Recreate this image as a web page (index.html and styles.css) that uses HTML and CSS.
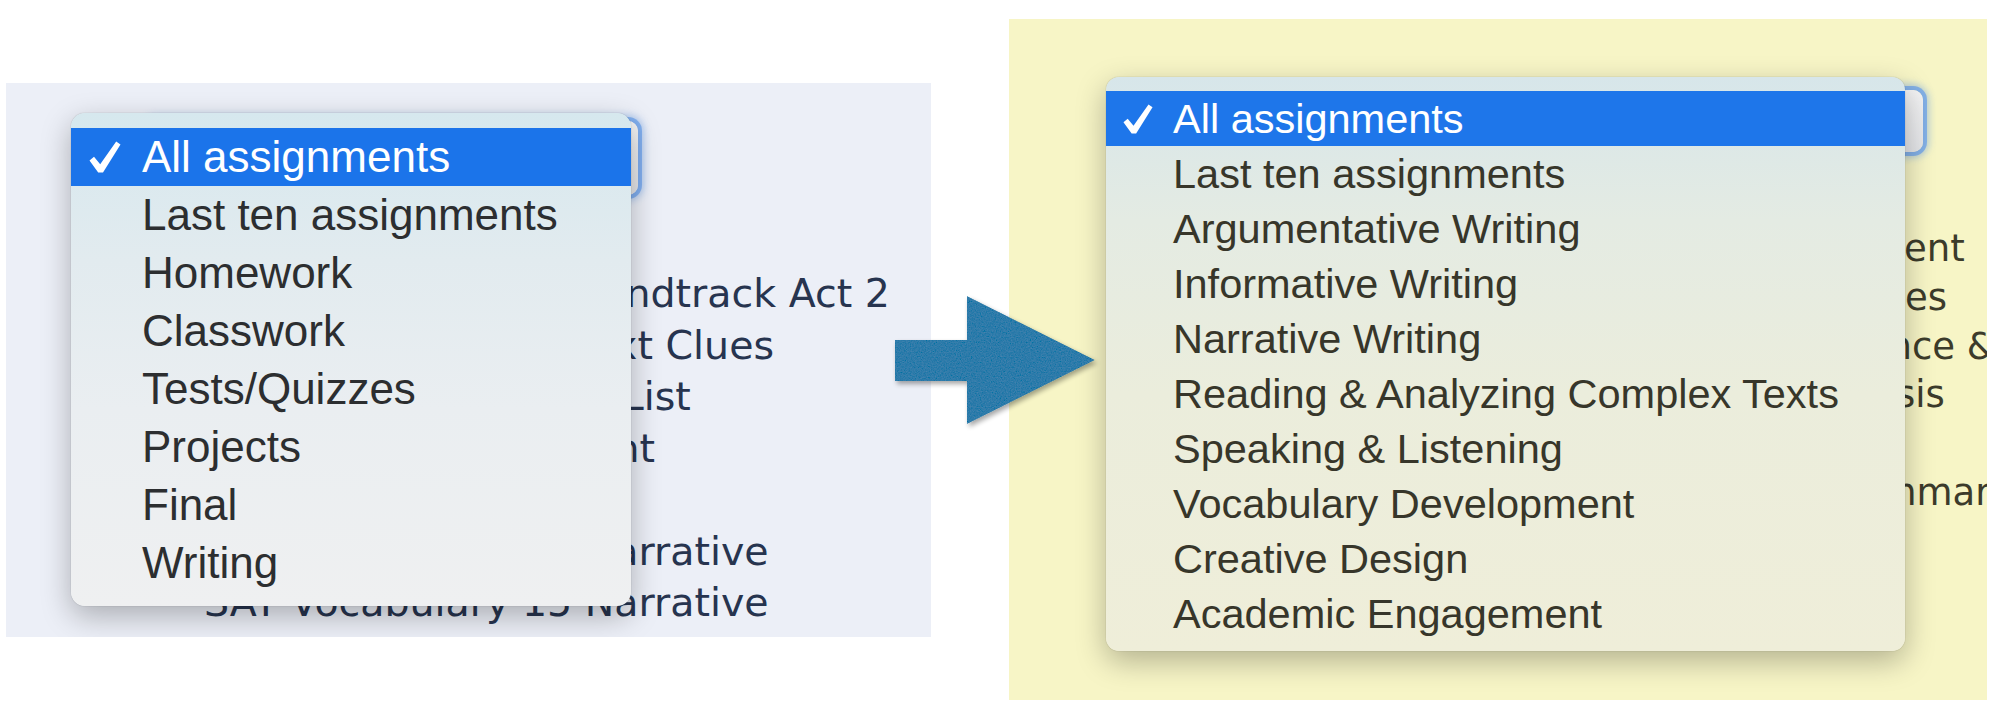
FILE: index.html
```html
<!DOCTYPE html>
<html lang="en">
<head>
    <meta charset="UTF-8">
    <meta name="viewport" content="width=device-width, initial-scale=1.0">
    <title>Assignment filter: before and after</title>
    <link rel="stylesheet" href="styles.css">
</head>
<body>
    <div class="stage">
        <!-- old category list -->
        <div class="shot shot-before">
            <div class="select"></div>
            <div class="rows">
                <div>Romeo and Juliet Soundtrack Act 2</div>
                <div>SAT Vocab 14: Context Clues</div>
                <div>Romeo &amp; Juliet Word List</div>
                <div>Act 2 Quiz Assessment</div>
                <div>Journal Entry</div>
                <div>SAT Vocabulary 14 Narrative</div>
                <div>SAT Vocabulary 15 Narrative</div>
                <div>Character Analysis Chart</div>
            </div>
            <ul class="menu">
                <li class="picked">
                    <span class="mark">
                        <svg viewBox="0 0 32 32" width="32" height="32"><path d="M0.5 19.5 L5 15.8 L11.2 23.2 L27.2 0.6 L31.5 3.4 L14 31.4 L9.2 31.4 Z" fill="#fff"/></svg>
                    </span>All assignments
                </li>
                <li><span class="mark"></span>Last ten assignments</li>
                <li><span class="mark"></span>Homework</li>
                <li><span class="mark"></span>Classwork</li>
                <li><span class="mark"></span>Tests/Quizzes</li>
                <li><span class="mark"></span>Projects</li>
                <li><span class="mark"></span>Final</li>
                <li><span class="mark"></span>Writing</li>
            </ul>
        </div>

        <svg class="arrow" viewBox="0 0 215 145" width="215" height="145">
            <defs>
                <filter id="paper" x="-10%" y="-10%" width="130%" height="130%">
                    <feGaussianBlur in="SourceAlpha" stdDeviation="2.5"/>
                    <feOffset dx="2" dy="3" result="blur"/>
                    <feComponentTransfer in="blur" result="shadow">
                        <feFuncA type="linear" slope="0.35"/>
                    </feComponentTransfer>
                    <feTurbulence type="fractalNoise" baseFrequency="0.8" numOctaves="2" seed="4" result="noise"/>
                    <feColorMatrix in="noise" type="matrix" values="0.33 0.33 0.33 0 0  0.33 0.33 0.33 0 0  0.33 0.33 0.33 0 0  0 0 0 0 1" result="gray"/>
                    <feComposite in="gray" in2="SourceGraphic" operator="arithmetic" k1="0" k2="0.14" k3="1" k4="-0.07" result="mix"/>
                    <feComposite in="mix" in2="SourceGraphic" operator="in" result="tex"/>
                    <feMerge>
                        <feMergeNode in="shadow"/>
                        <feMergeNode in="tex"/>
                    </feMerge>
                </filter>
            </defs>
            <polygon points="6,50 78,50 78,6 206,70 78,134 78,91 6,91" fill="#2e7baa" filter="url(#paper)"/>
        </svg>

        <!-- new standards-based list -->
        <div class="shot shot-after">
            <div class="select"></div>
            <div class="rows">
                <div>Argumentative Essay Assessment</div>
                <div>Unit 3: Vocabulary Context Clues</div>
                <div>Reading - Citing Textual Evidence &amp;</div>
                <div>Character Development Analysis</div>
                <div>Act 2 Quiz</div>
                <div>Language Conventions &amp; Grammar</div>
            </div>
            <ul class="menu">
                <li class="picked">
                    <span class="mark">
                        <svg viewBox="0 0 32 32" width="30" height="30"><path d="M0.5 19.5 L5 15.8 L11.2 23.2 L27.2 0.6 L31.5 3.4 L14 31.4 L9.2 31.4 Z" fill="#fff"/></svg>
                    </span>All assignments
                </li>
                <li><span class="mark"></span>Last ten assignments</li>
                <li><span class="mark"></span>Argumentative Writing</li>
                <li><span class="mark"></span>Informative Writing</li>
                <li><span class="mark"></span>Narrative Writing</li>
                <li><span class="mark"></span>Reading &amp; Analyzing Complex Texts</li>
                <li><span class="mark"></span>Speaking &amp; Listening</li>
                <li><span class="mark"></span>Vocabulary Development</li>
                <li><span class="mark"></span>Creative Design</li>
                <li><span class="mark"></span>Academic Engagement</li>
            </ul>
        </div>
    </div>
</body>
</html>
```

FILE: styles.css
```css
body {
    margin: 0;
    background: #ffffff;
    font-family: "Liberation Sans", Arial, sans-serif;
}
.stage {
    position: relative;
    display: flex;
    align-items: flex-start;
    gap: 78px;
    width: 2002px;
    height: 716px;
    padding-left: 6px;
    box-sizing: border-box;
}
.shot {
    position: relative;
    overflow: hidden;
    box-sizing: border-box;
    flex-shrink: 0;
}

/* the select control under the open menu */
.select {
    border-radius: 10px;
    background: linear-gradient(#f4f4f5, #e4e5e8);
    box-shadow: 0 0 0 4px rgba(104, 160, 236, 0.7), 0 0 7px 6px rgba(104, 160, 236, 0.45);
}
.rows {
    white-space: nowrap;
    font-family: "DejaVu Sans", sans-serif;
}

/* popup menu */
.menu {
    position: absolute;
    list-style: none;
    margin: 0;
    box-sizing: border-box;
    box-shadow: 0 10px 30px rgba(0, 0, 0, 0.28), 0 0 1px rgba(0, 0, 0, 0.4);
}
.menu li {
    display: flex;
    align-items: center;
    white-space: nowrap;
}
.menu .mark {
    display: flex;
    align-items: center;
    flex-shrink: 0;
}
.menu .picked {
    background: #1b74ea;
    color: #ffffff;
}

/* left picture */
.shot-before {
    width: 925px;
    height: 554px;
    margin-top: 83px;
    padding-top: 38px;
    background: #eceff7;
}
.shot-before .select {
    width: 492px;
    height: 74px;
    margin-left: 140px;
}
.shot-before .rows {
    margin-top: 73px;
    padding-left: 198px;
    font-size: 39.5px;
    line-height: 51.5px;
    color: #27344f;
}
.shot-before .menu {
    left: 65px;
    top: 30px;
    width: 560px;
    padding: 15px 0 14px;
    border-radius: 14px;
    background: linear-gradient(#d6e8ee 0%, #e2ebef 30%, #eaeef1 60%, #eff0f1 100%);
}
.shot-before .menu li {
    height: 58px;
    font-size: 44px;
    color: #2c2e30;
}
.shot-before .menu .mark {
    width: 71px;
    padding-left: 18px;
    box-sizing: border-box;
}
.shot-before .menu .picked {
    color: #ffffff;
}

/* right picture */
.shot-after {
    width: 978px;
    height: 681px;
    margin-top: 19px;
    padding-top: 71px;
    background: #f7f5c6;
}
.shot-after .select {
    width: 414px;
    height: 62px;
    margin-left: 500px;
}
.shot-after .rows {
    margin-top: 73px;
    padding-left: 328px;
    font-size: 37px;
    line-height: 48.8px;
    color: #3c3b2b;
}
.shot-after .menu {
    left: 97px;
    top: 58px;
    width: 799px;
    padding: 14px 0 10px;
    border-radius: 13px;
    background: linear-gradient(#d7e6ea 0%, #e4ebe3 25%, #ebeddc 55%, #efeed9 100%);
}
.shot-after .menu li {
    height: 55px;
    font-size: 41.5px;
    color: #37362a;
}
.shot-after .menu .mark {
    width: 67px;
    padding-left: 17px;
    box-sizing: border-box;
}
.shot-after .menu .picked {
    background: #1e76ea;
    color: #ffffff;
}

.arrow {
    position: absolute;
    left: 889px;
    top: 290px;
    z-index: 2;
    overflow: visible;
}
```
